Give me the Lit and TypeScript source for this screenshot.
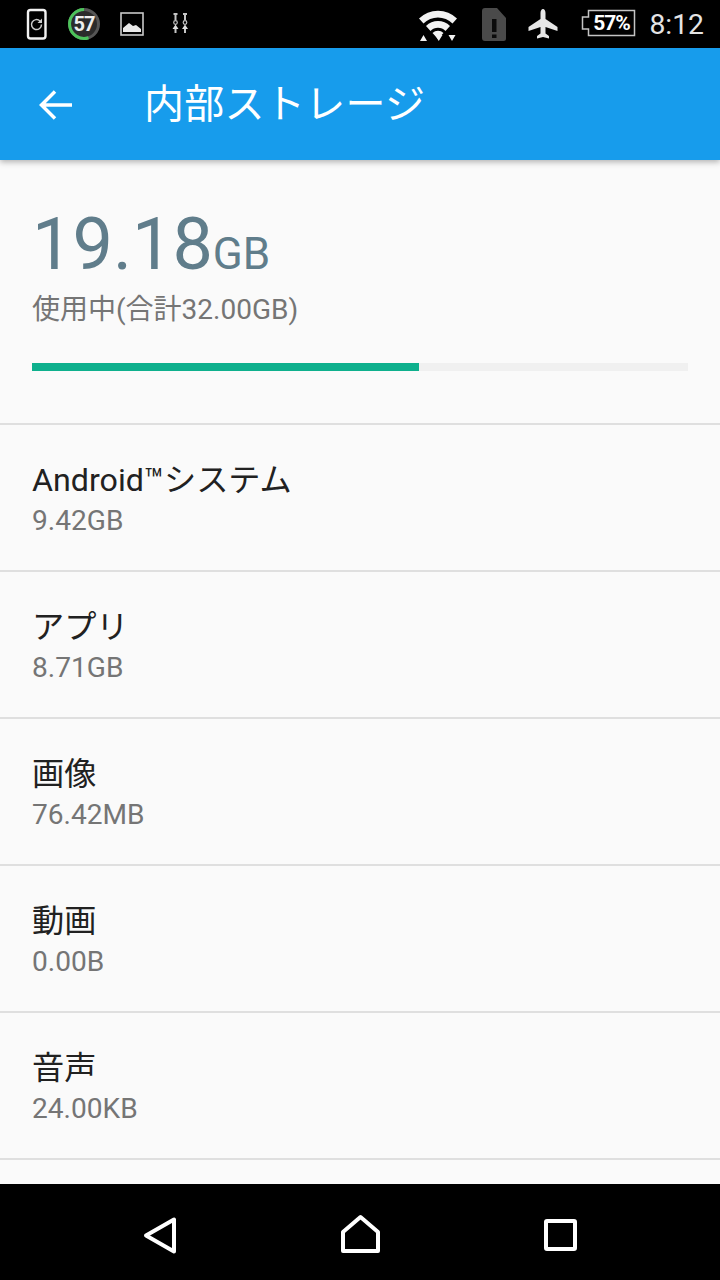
import { LitElement, html, css, svg } from 'lit';
import { customElement } from 'lit/decorators.js';

const rows = [
  { name: 'Android™システム', size: '9.42GB' },
  { name: 'アプリ', size: '8.71GB' },
  { name: '画像', size: '76.42MB' },
  { name: '動画', size: '0.00B' },
  { name: '音声', size: '24.00KB' },
];

const leftIcons = svg`
  <rect x="28" y="10" width="17.500" height="28.500" rx="2.500" fill="none" stroke="#f2f2f2" stroke-width="2.400"/>
  <path d="M41.500 24.500a5 5 0 1 1-1.500-3.500" fill="none" stroke="#ccc" stroke-width="1.500"/>
  <path d="M42 18.500v4.500h-4.500z" fill="#ccc"/>
  <circle cx="84" cy="24" r="15" fill="#2b2b2b"/>
  <circle cx="84" cy="24" r="14.500" fill="none" stroke="#555" stroke-width="3"/>
  <path d="M88.500 37.800A14.500 14.500 0 1 1 84 9.500" fill="none" stroke="#4cc35a" stroke-width="3"/>
  <rect x="121" y="13" width="22" height="22" fill="none" stroke="#c8c8c8" stroke-width="1.600"/>
  <path d="M123 32v-4l6-5 4 3 3-1 5 4v3z" fill="#e8e8e8"/>
  <g fill="none" stroke="#c4c4c4" stroke-width="2">
    <path d="M173.500 14h4M183 14h4M175.500 14v6M185 14v6M175.500 28v5M185 28v5"/>
    <circle cx="175.500" cy="22.500" r="1.800" stroke-width="1.200"/>
    <circle cx="185" cy="22.500" r="1.800" stroke-width="1.200"/>
  </g>
  <path d="M172.500 29l3-4.500 3 4.500zM182 29l3-4.500 3 4.500z" fill="#ddd"/>
`;

const rightIcons = svg`
  <path d="M419 18.500a27 27 0 0 1 38 0l-4.500 5a20.500 20.500 0 0 0-29 0zM426 26a17 17 0 0 1 24 0l-4.500 5a10.500 10.500 0 0 0-15 0zM432.500 33a8 8 0 0 1 11 0l-5.500 6z" fill="#f2f2f2"/>
  <path d="M420 41l3.500-6 3.500 6zM435 35h7.500l-3.750 6zM448.500 35h7l-3.500 6z" fill="#f2f2f2"/>
  <path d="M485 8h12l9 10v20.500a2.500 2.500 0 0 1-2.500 2.500h-18.500a3 3 0 0 1-3-3v-27a3 3 0 0 1 3-3z" fill="#4a4a4a"/>
  <rect x="492" y="19" width="4.500" height="13" fill="#0b0b0b"/>
  <rect x="492" y="34.500" width="4.500" height="3.500" fill="#0b0b0b"/>
  <path d="M543 9c1.500 0 2.500 1.700 2.500 4v6l12 8v4l-12-4v6.500l3.500 2.500v2.500l-6-1.500-6 1.500v-2.500l3.500-2.500v-6.500l-12 4v-4l12-8v-6c0-2.300 1-4 2.500-4z" fill="#e6e6e6"/>
  <path d="M588.500 10.500h46v25h-46v-6.500h-6v-12h6z" fill="none" stroke="#c4c4c4" stroke-width="1.500"/>
`;

const navIcons = svg`
  <path d="M174 1219.500v32l-28-16z" fill="none" stroke="#fff" stroke-width="4" stroke-linejoin="round"/>
  <path d="M343 1251v-19l17.500-15 17.500 15v19z" fill="none" stroke="#fff" stroke-width="4" stroke-linejoin="round"/>
  <rect x="546" y="1221" width="29" height="28" rx="1" fill="none" stroke="#fff" stroke-width="4"/>
`;

@customElement('app-root')
export class AppRoot extends LitElement {
  static styles = css`
    :host {
      display: flex;
      flex-direction: column;
      width: 720px;
      height: 1280px;
      overflow: hidden;
      position: relative;
      background: #fafafa;
      font-family: Roboto, 'Noto Sans CJK JP', sans-serif;
    }

    .status {
      height: 48px;
      flex: none;
      background: #000;
      display: flex;
      justify-content: flex-end;
      align-items: center;
      padding-right: 16px;
      box-sizing: border-box;
      color: #e4e4e4;
      font-size: 28.300px;
    }

    .overlay {
      position: absolute;
      left: 0;
      top: 0;
      pointer-events: none;
    }

    .badge {
      position: absolute;
      font-weight: 700;
      line-height: 1;
    }

    .badge.level {
      left: 71px;
      top: 14px;
      width: 26px;
      text-align: center;
      font-size: 20px;
      letter-spacing: -1px;
      color: #eee;
    }

    .badge.battery {
      left: 591px;
      top: 13px;
      width: 41px;
      text-align: center;
      font-size: 21px;
      letter-spacing: -1px;
      color: #fff;
    }

    .toolbar {
      height: 112px;
      flex: none;
      background: #179cec;
      display: flex;
      align-items: center;
      color: #fff;
      box-shadow: 0 2px 6px rgba(0, 0, 0, 0.3);
      position: relative;
      box-sizing: border-box;
      padding-top: 2px;
    }

    .back {
      width: 144px;
      flex: none;
      display: flex;
      padding-left: 38px;
      box-sizing: border-box;
    }

    .title {
      font-size: 40px;
      line-height: 1;
      letter-spacing: 0.3px;
    }

    .summary {
      flex: none;
      padding: 49px 32px 0;
      height: 265px;
      box-sizing: border-box;
      border-bottom: 2px solid #dfdfdf;
    }

    .used {
      color: #607d8b;
      font-size: 72px;
      line-height: 72px;
      display: flex;
      align-items: baseline;
    }

    .used span {
      font-size: 44px;
    }

    .total {
      color: #757575;
      font-size: 28px;
      line-height: 40px;
    }

    .bar {
      height: 8px;
      margin-top: 33px;
      background: #f0f0f0;
    }

    .bar div {
      height: 100%;
      background: #0eb08d;
    }

    .row {
      flex: none;
      height: 147px;
      box-sizing: border-box;
      padding: 31px 32px 0;
      border-bottom: 2px solid #dfdfdf;
    }

    .name {
      color: #212121;
      font-size: 32.200px;
      line-height: 48px;
    }

    .size {
      color: #757575;
      font-size: 28.100px;
      line-height: 32px;
      margin-top: 1px;
    }

    .nav {
      position: absolute;
      left: 0;
      right: 0;
      bottom: 0;
      height: 96px;
      background: #000;
    }
  `;

  render() {
    return html`
      <div class="status"><span>8:12</span></div>
      <div class="toolbar">
        <div class="back">
          <svg width="36" height="36" viewBox="0 0 36 36">
            <path d="M34 18H4M17 4.500 3.500 18 17 31.500" fill="none" stroke="#fff" stroke-width="3.500"/>
          </svg>
        </div>
        <div class="title">内部ストレージ</div>
      </div>
      <div class="summary">
        <div class="used">19.18<span>GB</span></div>
        <div class="total">使用中(合計32.00GB)</div>
        <div class="bar"><div style="width: ${(19.18 / 32) * 100 * 0.984}%"></div></div>
      </div>
      ${rows.map(
        (r) => html`
          <div class="row">
            <div class="name">${r.name}</div>
            <div class="size">${r.size}</div>
          </div>
        `
      )}
      <div class="nav"></div>
      <svg class="overlay" width="720" height="1280" viewBox="0 0 720 1280">
        ${leftIcons}${rightIcons}${navIcons}
      </svg>
      <span class="badge level">57</span>
      <span class="badge battery">57%</span>
    `;
  }
}
